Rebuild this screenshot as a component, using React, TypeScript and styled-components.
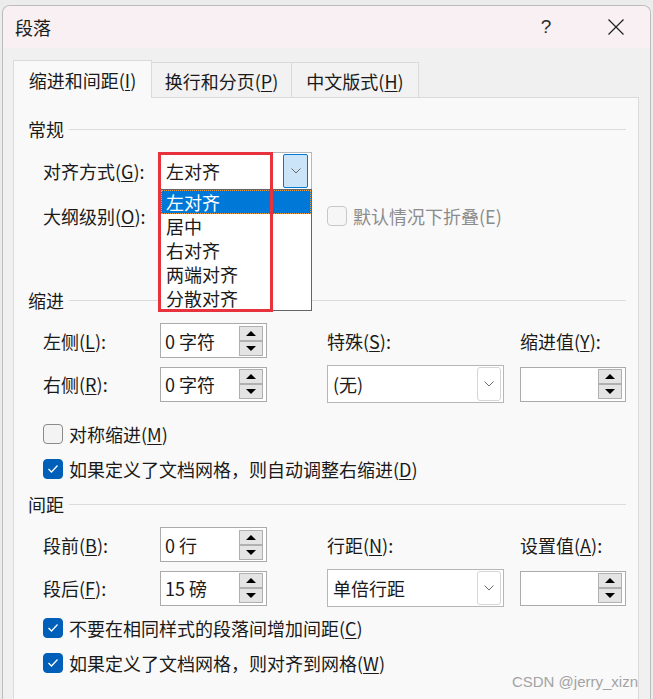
import React from "react";
import styled, { createGlobalStyle } from "styled-components";

const GlobalStyle = createGlobalStyle`
  html, body {
    margin: 0;
    padding: 0;
  }
  body {
    background: #ececec;
    font-family: "Noto Sans CJK SC", "Noto Sans", sans-serif;
    color: #1a1a1a;
    overflow: hidden;
  }
`;

type Option = { label: string; selected?: boolean };

const alignOptions: Option[] = [
  { label: "左对齐", selected: true },
  { label: "居中" },
  { label: "右对齐" },
  { label: "两端对齐" },
  { label: "分散对齐" },
];

const Key: React.FC<{ text: string; k: string; tail?: string }> = ({ text, k, tail = "" }) => (
  <>
    {text}(<u>{k}</u>){tail}
  </>
);

const Chevron = () => (
  <svg width="10" height="6" viewBox="0 0 10 6">
    <polyline points="0.5,0.5 5,5 9.5,0.5" fill="none" stroke="#6a6a6a" strokeWidth="1" />
  </svg>
);

const Tick = () => (
  <svg width="12" height="10" viewBox="0 0 12 10">
    <polyline points="1.5,5 4.5,8 10.5,1.5" fill="none" stroke="#fff" strokeWidth="1.3" />
  </svg>
);

const Spinner: React.FC<{ value?: string }> = ({ value = "" }) => (
  <SpinBox>
    <SpinValue>{value}</SpinValue>
    <SpinButtons>
      <SpinHalf>
        <Arrow $up />
      </SpinHalf>
      <SpinHalf>
        <Arrow />
      </SpinHalf>
    </SpinButtons>
  </SpinBox>
);

const Combo: React.FC<{ value?: string; width: number; open?: boolean }> = ({
  value = "",
  width,
  open,
}) => (
  <ComboBox $width={width}>
    <ComboValue>{value}</ComboValue>
    <ComboButton $open={open}>
      <Chevron />
    </ComboButton>
    {open && (
      <>
        <DropList>
          {alignOptions.map((o) => (
            <DropItem key={o.label} $selected={o.selected}>
              {o.label}
            </DropItem>
          ))}
        </DropList>
        <Highlight />
      </>
    )}
  </ComboBox>
);

const Check: React.FC<{ checked?: boolean; disabled?: boolean; children: React.ReactNode }> = ({
  checked,
  disabled,
  children,
}) => (
  <CheckRow $disabled={disabled}>
    <CheckBox $checked={checked} $disabled={disabled}>
      {checked && <Tick />}
    </CheckBox>
    <span>{children}</span>
  </CheckRow>
);

const App: React.FC = () => {
  return (
    <>
      <GlobalStyle />
      <Screen>
        <Window>
          <TitleBar>
            <Title>段落</Title>
            <HelpButton>?</HelpButton>
            <CloseButton>
              <svg width="16" height="16" viewBox="0 0 16 16">
                <path d="M0.5 0.5 L15.5 15.5 M15.5 0.5 L0.5 15.5" stroke="#1f1f1f" strokeWidth="1.2" />
              </svg>
            </CloseButton>
          </TitleBar>

          <Body>
            <TabRow>
              <Tab $active $width={139}>
                <Key text="缩进和间距" k="I" />
              </Tab>
              <Tab $width={140}>
                <Key text="换行和分页" k="P" />
              </Tab>
              <Tab $width={127}>
                <Key text="中文版式" k="H" />
              </Tab>
            </TabRow>

            <Panel>
              <SectionHeader>
                常规
                <Rule />
              </SectionHeader>
              <FieldGrid $mt={11}>
                <Label>
                  <Key text="对齐方式" k="G" tail=":" />
                </Label>
                <Cell $col="2 / span 2">
                  <Combo value="左对齐" width={152} open />
                </Cell>
                <Label>
                  <Key text="大纲级别" k="O" tail=":" />
                </Label>
                <Cell $col="2 / span 2">
                  {/* covered by the open list above */}
                  <Combo width={152} />
                </Cell>
                <Cell $col="4 / span 3">
                  <Check disabled>默认情况下折叠(E)</Check>
                </Cell>
              </FieldGrid>

              <SectionHeader $mt={53}>
                缩进
                <Rule />
              </SectionHeader>
              <FieldGrid $mt={11}>
                <Label>
                  <Key text="左侧" k="L" tail=":" />
                </Label>
                <Cell $col="2">
                  <Spinner value="0 字符" />
                </Cell>
                <Label $col="4">
                  <Key text="特殊" k="S" tail=":" />
                </Label>
                <Label $col="6">
                  <Key text="缩进值" k="Y" tail=":" />
                </Label>
                <Label>
                  <Key text="右侧" k="R" tail=":" />
                </Label>
                <Cell $col="2">
                  <Spinner value="0 字符" />
                </Cell>
                <Cell $col="4">
                  <Combo value="(无)" width={177} />
                </Cell>
                <Cell $col="6">
                  <Spinner />
                </Cell>
              </FieldGrid>
              <CheckLine $mt={19}>
                <Check>
                  <Key text="对称缩进" k="M" />
                </Check>
              </CheckLine>
              <CheckLine $mt={11}>
                <Check checked>
                  <Key text="如果定义了文档网格，则自动调整右缩进" k="D" />
                </Check>
              </CheckLine>

              <SectionHeader $mt={11}>
                间距
                <Rule />
              </SectionHeader>
              <FieldGrid $mt={11}>
                <Label>
                  <Key text="段前" k="B" tail=":" />
                </Label>
                <Cell $col="2">
                  <Spinner value="0 行" />
                </Cell>
                <Label $col="4">
                  <Key text="行距" k="N" tail=":" />
                </Label>
                <Label $col="6">
                  <Key text="设置值" k="A" tail=":" />
                </Label>
                <Label>
                  <Key text="段后" k="F" tail=":" />
                </Label>
                <Cell $col="2">
                  <Spinner value="15 磅" />
                </Cell>
                <Cell $col="4">
                  <Combo value="单倍行距" width={177} />
                </Cell>
                <Cell $col="6">
                  <Spinner />
                </Cell>
              </FieldGrid>
              <CheckLine $mt={9}>
                <Check checked>
                  <Key text="不要在相同样式的段落间增加间距" k="C" />
                </Check>
              </CheckLine>
              <CheckLine $mt={11}>
                <Check checked>
                  <Key text="如果定义了文档网格，则对齐到网格" k="W" />
                </Check>
              </CheckLine>
            </Panel>
          </Body>
        </Window>
        <Watermark>CSDN @jerry_xizn</Watermark>
      </Screen>
    </>
  );
};

export const Screen = styled.div`
  position: relative;
  box-sizing: border-box;
  width: 653px;
  height: 699px;
  padding: 5px 2px 0 2px;
  overflow: hidden;
  background: #ececec;
`;

export const Window = styled.div`
  box-sizing: border-box;
  width: 649px;
  height: 694px;
  border: 1px solid #bcbcbc;
  border-bottom: none;
  border-radius: 8px 8px 0 0;
  background: #f0f0f0;
  overflow: hidden;
  display: flex;
  flex-direction: column;
`;

export const TitleBar = styled.div`
  height: 42px;
  display: flex;
  align-items: center;
  padding-left: 12px;
  background: #f8f0f2;
  flex-shrink: 0;
`;

export const Title = styled.div`
  font-size: 18px;
  line-height: 24px;
  color: #1b1b1b;
  flex: 1;
`;

export const HelpButton = styled.div`
  width: 20px;
  font-family: "Liberation Sans", sans-serif;
  font-size: 19px;
  line-height: 24px;
  color: #2a2a2a;
  text-align: center;
  margin-right: 52px;
`;

export const CloseButton = styled.div`
  width: 16px;
  height: 16px;
  display: flex;
  margin-right: 26px;
`;

export const Body = styled.div`
  flex: 1;
  display: flex;
  flex-direction: column;
  padding: 12px 11px 0 10px;
`;

export const TabRow = styled.div`
  display: flex;
  align-items: flex-end;
  height: 38px;
  margin-bottom: -1px;
  position: relative;
  z-index: 1;
`;

export const Tab = styled.div<{ $active?: boolean; $width: number }>`
  box-sizing: border-box;
  width: ${({ $width }) => $width}px;
  height: ${({ $active }) => ($active ? 38 : 35)}px;
  margin-bottom: ${({ $active }) => ($active ? 0 : 1)}px;
  padding-top: ${({ $active }) => ($active ? 0 : 2)}px;
  border: 1px solid #dadada;
  border-bottom: none;
  border-left: ${({ $active }) => ($active ? "1px solid #dadada" : "none")};
  background: ${({ $active }) => ($active ? "#f9f9f9" : "#f2f2f2")};
  display: flex;
  align-items: center;
  justify-content: center;
  font-size: 18px;
  line-height: 24px;
  white-space: nowrap;

  u {
    text-underline-offset: 2px;
  }
`;

export const Panel = styled.div`
  flex: 1;
  box-sizing: border-box;
  border: 1px solid #dadada;
  border-bottom: none;
  background: #f9f9f9;
  padding: 19px 12px 0 14px;
  display: flex;
  flex-direction: column;
`;

export const SectionHeader = styled.div<{ $mt?: number }>`
  display: flex;
  align-items: center;
  height: 24px;
  margin-top: ${({ $mt }) => $mt ?? 0}px;
  font-size: 18px;
  line-height: 24px;
  white-space: nowrap;
`;

export const Rule = styled.div`
  flex: 1;
  height: 1px;
  margin-left: 5px;
  background: #dcdcdc;
`;

export const FieldGrid = styled.div<{ $mt?: number }>`
  display: grid;
  grid-template-columns: 117px 107px 60px 177px 16px 106px;
  row-gap: 7px;
  align-items: center;
  margin: ${({ $mt }) => $mt ?? 0}px 0 0 15px;
`;

export const Cell = styled.div<{ $col?: string }>`
  grid-column: ${({ $col }) => $col ?? "auto"};
  display: flex;
`;

export const Label = styled.div<{ $col?: string }>`
  grid-column: ${({ $col }) => $col ?? "1"};
  font-size: 18px;
  line-height: 24px;
  white-space: nowrap;

  u {
    text-underline-offset: 2px;
  }
`;

export const ComboBox = styled.div<{ $width: number }>`
  position: relative;
  box-sizing: border-box;
  width: ${({ $width }) => $width}px;
  height: 38px;
  border: 1px solid #b6b6b6;
  background: #fff;
  display: flex;
  align-items: center;
  padding: 0 2px 0 5px;
`;

export const ComboValue = styled.div`
  flex: 1;
  font-size: 18px;
  line-height: 24px;
  white-space: nowrap;
`;

export const ComboButton = styled.div<{ $open?: boolean }>`
  box-sizing: border-box;
  width: ${({ $open }) => ($open ? 25 : 24)}px;
  height: 34px;
  border: 1px solid ${({ $open }) => ($open ? "#0078d4" : "#d6d6d6")};
  border-radius: ${({ $open }) => ($open ? 2 : 3)}px;
  background: ${({ $open }) => ($open ? "#cce4f7" : "#fff")};
  display: flex;
  align-items: center;
  justify-content: center;
  margin-right: ${({ $open }) => ($open ? 1 : 0)}px;
`;

export const DropList = styled.div`
  position: absolute;
  top: 100%;
  left: -1px;
  width: 152px;
  box-sizing: border-box;
  border: 1px solid #646464;
  background: #fff;
  z-index: 5;
`;

export const DropItem = styled.div<{ $selected?: boolean }>`
  height: 24px;
  padding-left: 5px;
  font-size: 18px;
  line-height: 24px;
  color: ${({ $selected }) => ($selected ? "#fff" : "#1a1a1a")};
  background: ${({ $selected }) => ($selected ? "#0078d7" : "transparent")};
  outline: ${({ $selected }) => ($selected ? "1px dotted #f0a040" : "none")};
  outline-offset: -1px;
`;

export const Highlight = styled.div`
  position: absolute;
  left: -3px;
  top: -1px;
  width: 115px;
  height: 160px;
  box-sizing: border-box;
  border: 3px solid #e8333e;
  z-index: 6;
  pointer-events: none;
`;

export const SpinBox = styled.div`
  box-sizing: border-box;
  width: 107px;
  height: 35px;
  border: 1px solid #ababab;
  background: #fff;
  display: flex;
  align-items: center;
  padding: 0 3px 0 4px;
`;

export const SpinValue = styled.div`
  flex: 1;
  font-size: 18px;
  line-height: 24px;
  white-space: nowrap;
`;

export const SpinButtons = styled.div`
  width: 24px;
  height: 30px;
  display: flex;
  flex-direction: column;
`;

export const SpinHalf = styled.div`
  box-sizing: border-box;
  height: 15px;
  border: 1px solid #b0b0b0;
  background: #e4e4e4;
  display: flex;
  align-items: center;
  justify-content: center;
`;

export const Arrow = styled.div<{ $up?: boolean }>`
  width: 0;
  height: 0;
  border-left: 5px solid transparent;
  border-right: 5px solid transparent;
  ${({ $up }) => ($up ? "border-bottom: 5px solid #000;" : "border-top: 5px solid #000;")}
`;

export const CheckLine = styled.div<{ $mt?: number }>`
  margin: ${({ $mt }) => $mt ?? 0}px 0 0 15px;
  display: flex;
`;

export const CheckRow = styled.label<{ $disabled?: boolean }>`
  display: flex;
  align-items: center;
  gap: 6px;
  height: 24px;
  font-size: 18px;
  line-height: 24px;
  white-space: nowrap;
  color: ${({ $disabled }) => ($disabled ? "#8c8c8c" : "#1a1a1a")};

  u {
    text-underline-offset: 2px;
  }
`;

export const CheckBox = styled.span<{ $checked?: boolean; $disabled?: boolean }>`
  box-sizing: border-box;
  width: 20px;
  height: 20px;
  border-radius: 4px;
  display: flex;
  align-items: center;
  justify-content: center;
  background: ${({ $checked, $disabled }) =>
    $checked ? "#005fb8" : $disabled ? "#f6f6f6" : "#f3f3f3"};
  border: 1px solid
    ${({ $checked, $disabled }) => ($checked ? "#005fb8" : $disabled ? "#c8c8c8" : "#8a8a8a")};
`;

export const Watermark = styled.div`
  position: absolute;
  right: 15px;
  bottom: 8px;
  font-family: "Liberation Sans", sans-serif;
  font-size: 15px;
  line-height: 18px;
  color: #a3a3a3;
  pointer-events: none;
`;

export default App;
